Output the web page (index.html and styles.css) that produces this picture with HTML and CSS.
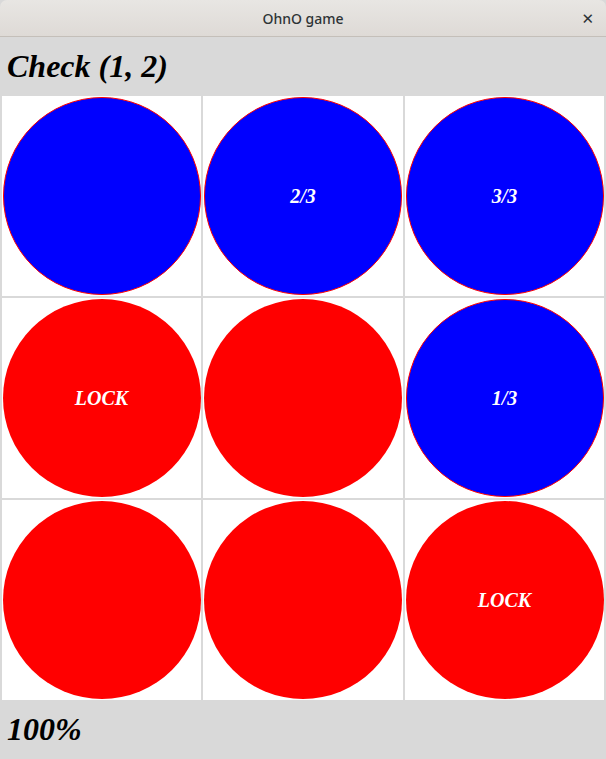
FILE: index.html
```html
<!DOCTYPE html>
<html lang="en">
<head>
    <meta charset="UTF-8">
    <meta name="viewport" content="width=device-width, initial-scale=1.0">
    <title>OhnO game</title>
    <link rel="stylesheet" href="styles.css">
</head>
<body>
    <div class="window">
        <div class="titlebar">
            <span class="title">OhnO game</span>
            <span class="close">&#x2715;</span>
        </div>

        <div class="status">Check (1, 2)</div>

        <div class="board">
            <div class="cell"><div class="dot blue"></div></div>
            <div class="cell"><div class="dot blue">2/3</div></div>
            <div class="cell"><div class="dot blue">3/3</div></div>

            <div class="cell"><div class="dot red">LOCK</div></div>
            <div class="cell"><div class="dot red"></div></div>
            <div class="cell"><div class="dot blue">1/3</div></div>

            <div class="cell"><div class="dot red"></div></div>
            <div class="cell"><div class="dot red"></div></div>
            <div class="cell"><div class="dot red">LOCK</div></div>
        </div>

        <div class="status">100%</div>
    </div>
</body>
</html>
```

FILE: styles.css
```css
body {
    margin: 0;
    background: #ffffff;
    font-family: 'Liberation Serif', 'Times New Roman', serif;
}

.window {
    width: 606px;
    height: 759px;
    display: flex;
    flex-direction: column;
    background: #d9d9d9;
    overflow: hidden;
}

.titlebar {
    height: 36px;
    flex: none;
    position: relative;
    display: flex;
    align-items: center;
    justify-content: center;
    background: linear-gradient(#e8e6e3, #dedad6);
    border-bottom: 1px solid #c4bfb9;
    border-radius: 7px 7px 0 0;
    font-family: 'Noto Sans', 'DejaVu Sans', sans-serif;
    font-size: 14px;
    font-weight: 500;
    color: #2e3436;
}

.close {
    position: absolute;
    right: 12px;
    top: 8px;
    font-size: 15px;
    font-weight: bold;
    color: #2e3436;
}

.status {
    height: 59px;
    flex: none;
    display: flex;
    align-items: center;
    padding-left: 7px;
    font-size: 32px;
    font-weight: bold;
    font-style: italic;
    color: #000;
}

.board {
    display: grid;
    grid-template-columns: 199px 200px 199px;
    grid-template-rows: 200px 200px 200px;
    gap: 2px;
    padding: 0 2px;
    height: 604px;
    flex: none;
}

.cell {
    background: #ffffff;
    display: flex;
    align-items: center;
    justify-content: center;
}

.dot {
    width: 198px;
    height: 198px;
    border-radius: 50%;
    box-sizing: border-box;
    display: flex;
    align-items: center;
    justify-content: center;
    color: #ffffff;
    font-size: 20px;
    font-weight: bold;
    font-style: italic;
}

.red {
    background: #ff0000;
}

.blue {
    background: #0000ff;
    border: 1px solid #ff0000;
}
```
